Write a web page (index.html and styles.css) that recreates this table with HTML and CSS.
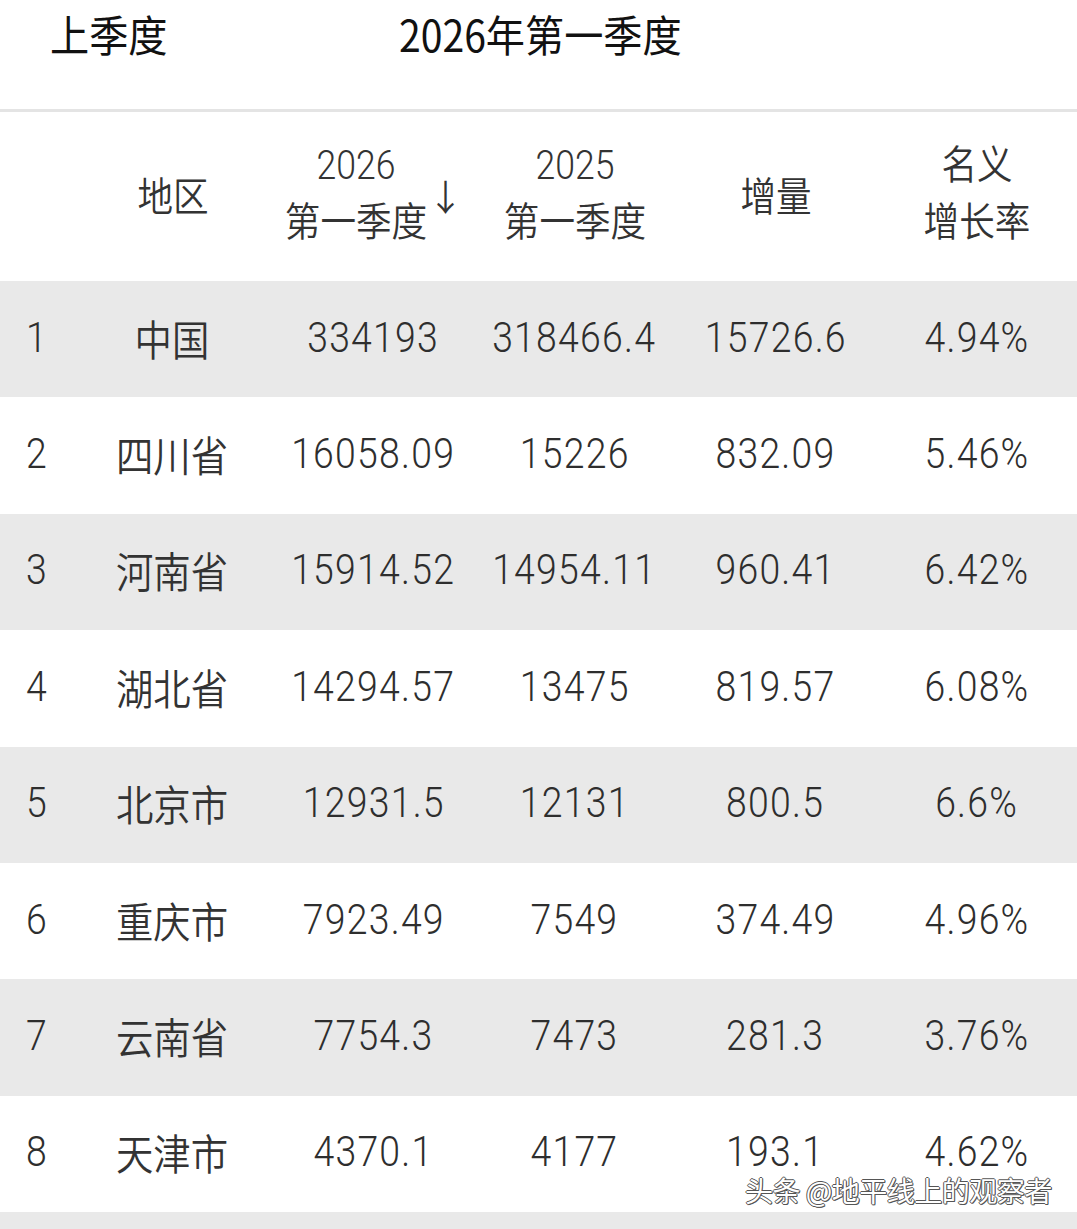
FILE: index.html
```html
<!DOCTYPE html>
<html lang="zh">
<head>
<meta charset="utf-8">
<title>2026年第一季度</title>
<link rel="stylesheet" href="styles.css">
</head>
<body>
<div class="page">
  <div class="tabs">
    <div class="tab tab-prev"><span class="t">上季度</span></div>
    <div class="tab tab-cur"><span class="t">2026年第一季度</span></div>
  </div>
  <div class="table">
    <div class="row head">
      <div class="cell idx"></div>
      <div class="cell"><span class="t">地区</span></div>
      <div class="cell sorted"><span class="t two">2026<br>第一季度</span><span class="arrow">↓</span></div>
      <div class="cell"><span class="t two">2025<br>第一季度</span></div>
      <div class="cell"><span class="t">增量</span></div>
      <div class="cell"><span class="t two">名义<br>增长率</span></div>
    </div>
    <div class="row alt"><div class="cell idx"><span class="t n">1</span></div><div class="cell"><span class="t">中国</span></div><div class="cell"><span class="t n">334193</span></div><div class="cell"><span class="t n">318466.4</span></div><div class="cell"><span class="t n">15726.6</span></div><div class="cell"><span class="t n">4.94%</span></div></div>
    <div class="row"><div class="cell idx"><span class="t n">2</span></div><div class="cell"><span class="t">四川省</span></div><div class="cell"><span class="t n">16058.09</span></div><div class="cell"><span class="t n">15226</span></div><div class="cell"><span class="t n">832.09</span></div><div class="cell"><span class="t n">5.46%</span></div></div>
    <div class="row alt"><div class="cell idx"><span class="t n">3</span></div><div class="cell"><span class="t">河南省</span></div><div class="cell"><span class="t n">15914.52</span></div><div class="cell"><span class="t n">14954.11</span></div><div class="cell"><span class="t n">960.41</span></div><div class="cell"><span class="t n">6.42%</span></div></div>
    <div class="row"><div class="cell idx"><span class="t n">4</span></div><div class="cell"><span class="t">湖北省</span></div><div class="cell"><span class="t n">14294.57</span></div><div class="cell"><span class="t n">13475</span></div><div class="cell"><span class="t n">819.57</span></div><div class="cell"><span class="t n">6.08%</span></div></div>
    <div class="row alt"><div class="cell idx"><span class="t n">5</span></div><div class="cell"><span class="t">北京市</span></div><div class="cell"><span class="t n">12931.5</span></div><div class="cell"><span class="t n">12131</span></div><div class="cell"><span class="t n">800.5</span></div><div class="cell"><span class="t n">6.6%</span></div></div>
    <div class="row"><div class="cell idx"><span class="t n">6</span></div><div class="cell"><span class="t">重庆市</span></div><div class="cell"><span class="t n">7923.49</span></div><div class="cell"><span class="t n">7549</span></div><div class="cell"><span class="t n">374.49</span></div><div class="cell"><span class="t n">4.96%</span></div></div>
    <div class="row alt"><div class="cell idx"><span class="t n">7</span></div><div class="cell"><span class="t">云南省</span></div><div class="cell"><span class="t n">7754.3</span></div><div class="cell"><span class="t n">7473</span></div><div class="cell"><span class="t n">281.3</span></div><div class="cell"><span class="t n">3.76%</span></div></div>
    <div class="row"><div class="cell idx"><span class="t n">8</span></div><div class="cell"><span class="t">天津市</span></div><div class="cell"><span class="t n">4370.1</span></div><div class="cell"><span class="t n">4177</span></div><div class="cell"><span class="t n">193.1</span></div><div class="cell"><span class="t n">4.62%</span></div></div>
    <div class="row alt"></div>
  </div>
  <div class="watermark">头条 @地平线上的观察者</div>
</div>
</body>
</html>
```

FILE: styles.css
```css
html, body {
  margin: 0;
  padding: 0;
  background: #ffffff;
}
.page {
  position: relative;
  width: 1077px;
  height: 1229px;
  overflow: hidden;
  font-family: "Roboto", "Noto Sans CJK SC", sans-serif;
  color: #333333;
}
.t {
  display: inline-block;
  transform: scaleX(0.89);
  white-space: nowrap;
}
.n {
  font-weight: 300;
  letter-spacing: 1.4px;
  color: #2e2e2e;
}
.tabs {
  display: flex;
  align-items: flex-start;
  border-bottom: 3px solid #e4e4e4;
  box-sizing: border-box;
  height: 112px;
}
.tab {
  font-family: "Noto Sans CJK SC", sans-serif;
  font-size: 43px;
  line-height: 66px;
  color: #111111;
}
.tab .t {
  transform: scaleX(0.91);
  transform-origin: left center;
}
.tab-prev {
  margin-left: 50px;
}
.tab-cur {
  margin-left: 220px;
}
.table {
  display: flex;
  flex-direction: column;
}
.row {
  display: grid;
  grid-template-columns: 72px repeat(5, 1fr);
  height: 116.375px;
  align-items: center;
  font-size: 42px;
  font-weight: 350;
  box-sizing: border-box;
  padding-bottom: 4px;
}
.row.alt {
  background: #e9e9e9;
}
.row.head {
  height: 169px;
  font-size: 40px;
  padding-bottom: 6px;
}
.cell {
  display: flex;
  justify-content: center;
  align-items: center;
  white-space: nowrap;
}
.cell.idx {
  justify-content: flex-start;
  padding-left: 26px;
}
.cell.idx .t {
  transform-origin: left center;
}
.two {
  line-height: 57px;
  text-align: center;
}
.sorted {
  margin-left: -7px;
}
.arrow {
  display: inline-block;
  font-size: 36px;
  margin-left: -9px;
  margin-top: 2px;
}
.watermark {
  position: absolute;
  left: 745px;
  top: 1170px;
  font-family: "Noto Sans CJK SC", sans-serif;
  font-size: 28px;
  line-height: 40px;
  color: #ffffff;
  text-shadow: -1px 0 #555, 1px 0 #555, 0 -1px #555, 0 1px #555, 1px 1px #555;
  letter-spacing: -0.5px;
}
```
